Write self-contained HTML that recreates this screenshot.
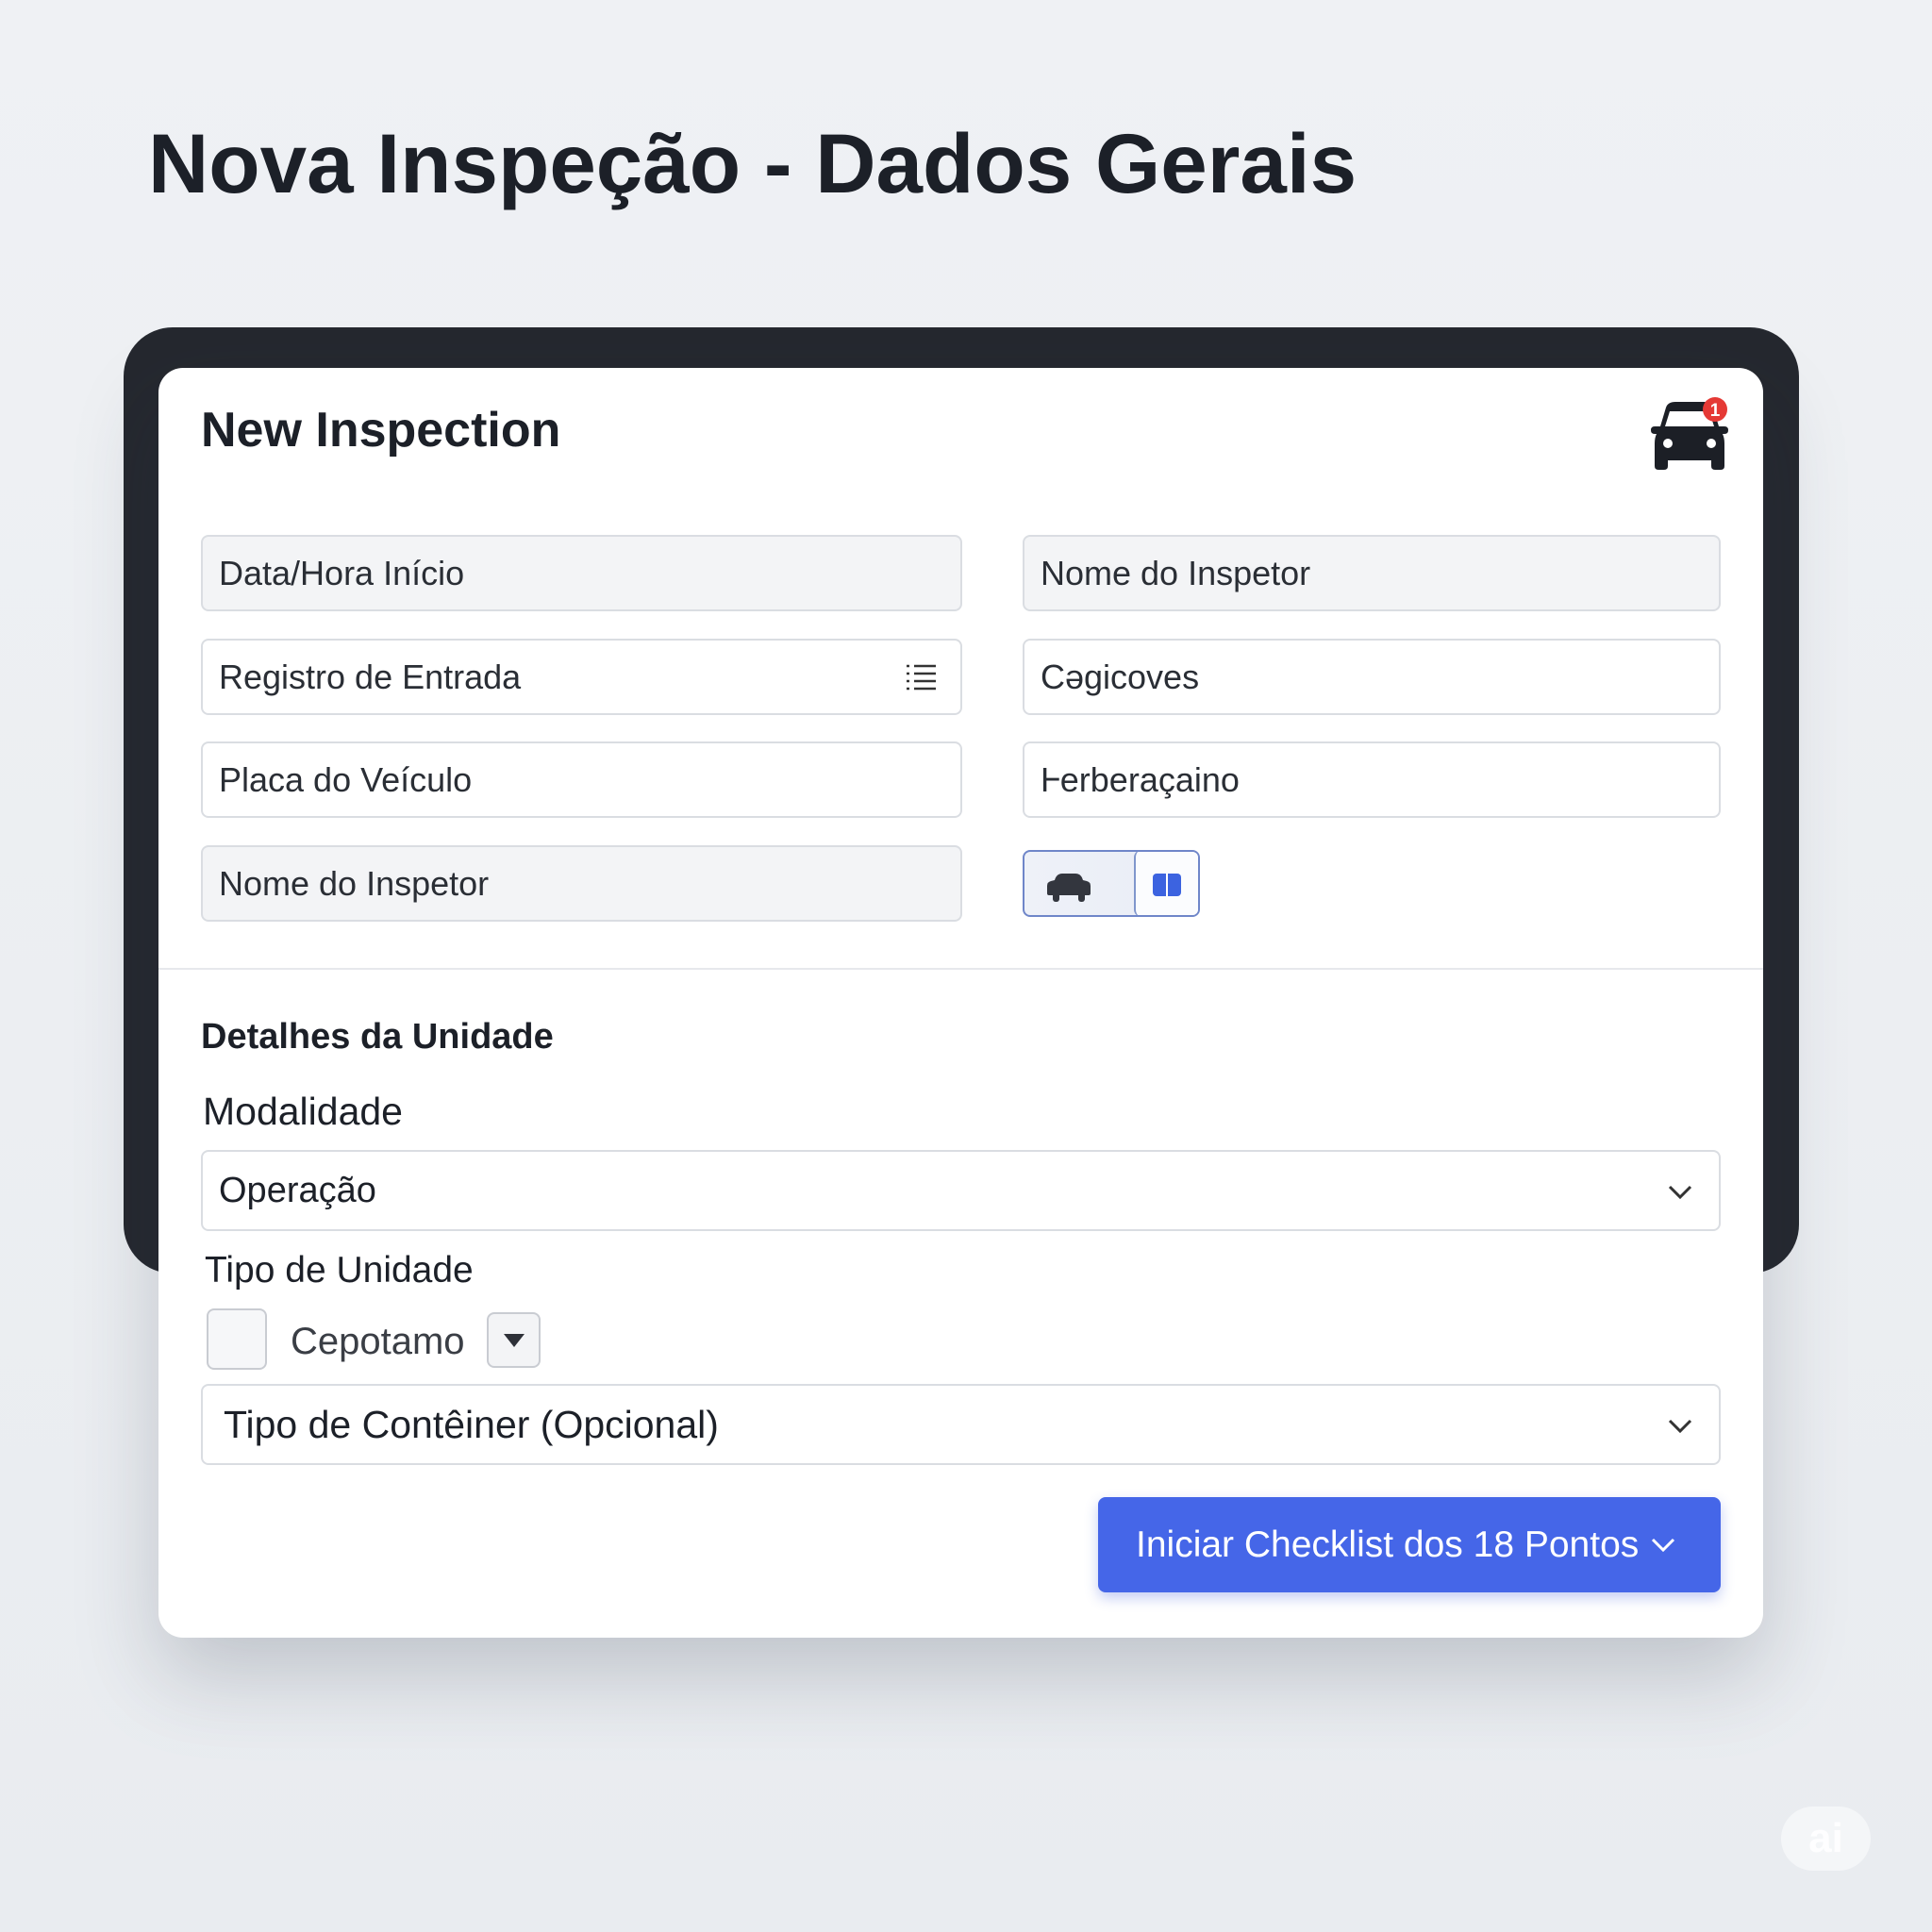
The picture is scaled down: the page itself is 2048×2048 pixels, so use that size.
<!DOCTYPE html>
<html><head><meta charset="utf-8"><style>
*{box-sizing:border-box;margin:0;padding:0}
body{width:2048px;height:2048px;background:linear-gradient(180deg,#eff1f4,#e9ecf0);font-family:"Liberation Sans",sans-serif;position:relative;overflow:hidden;color:#1f2329}
.a{position:absolute}
h1{position:absolute;left:157px;top:122px;font-size:89px;font-weight:bold;color:#1c2028;white-space:nowrap}
.frame{left:131px;top:347px;width:1776px;height:1003px;background:#25282f;border-radius:52px}
.card{left:168px;top:390px;width:1701px;height:1346px;background:#fff;border-radius:26px;box-shadow:0 40px 90px rgba(40,50,70,.22)}
.in{position:absolute;height:81px;border:2px solid #dadde2;border-radius:8px;background:#fff;font-size:36px;color:#2a2e35;padding-left:17px;line-height:77px;white-space:nowrap}
.g{background:#f3f4f6}
.L{left:213px;width:807px}.R{left:1084px;width:740px}
.sel{position:absolute;left:213px;width:1611px;height:86px;border:2px solid #dadde2;border-radius:8px;background:#fff;color:#1c2028;padding-left:17px;line-height:82px;white-space:nowrap}
.chev{position:absolute;right:26px;top:28px}
</style></head><body>
<h1>Nova Inspeção - Dados Gerais</h1>
<div class="a frame"></div>
<div class="a card"></div>
<div class="a" style="left:213px;top:426px;font-size:52px;font-weight:bold;color:#1c2028">New Inspection</div>
<svg class="a" style="left:1748px;top:418px" width="90" height="85" viewBox="0 0 90 85">
<path d="M18 14 Q20 8 28 8 H58 Q66 8 68 14 L74 34 H80 Q84 34 84 38 Q84 42 80 42 H78 Q80 46 80 52 V76 Q80 80 76 80 H70 Q66 80 66 76 V70 H20 V76 Q20 80 16 80 H10 Q6 80 6 76 V52 Q6 46 8 42 H6 Q2 42 2 38 Q2 34 6 34 H12 Z M22 18 L17 34 H69 L64 18 Z" fill="#1c1f26" fill-rule="evenodd"/>
<circle cx="20" cy="52" r="5" fill="#fff"/><circle cx="66" cy="52" r="5" fill="#fff"/>
<circle cx="70" cy="16" r="13" fill="#e53935"/>
<text x="70" y="23" font-size="19" font-weight="bold" fill="#fff" text-anchor="middle" font-family="Liberation Sans">1</text>
</svg>
<div class="in g L" style="top:567px">Data/Hora Início</div>
<div class="in g R" style="top:567px">Nome do Inspetor</div>
<div class="in L" style="top:677px">Registro de Entrada
<svg class="a" style="right:24px;top:22px" width="36" height="36" viewBox="0 0 36 36" stroke="#333" stroke-width="2.5"><path d="M3 5h3M3 13h3M3 21h3M3 29h3M11 5h23M11 13h23M11 21h23M11 29h23"/></svg></div>
<div class="in R" style="top:677px">Cəgicoves</div>
<div class="in L" style="top:786px">Placa do Veículo</div>
<div class="in R" style="top:786px">Ⱶerberaçaino</div>
<div class="in g L" style="top:896px">Nome do Inspetor</div>
<div class="a" style="left:1084px;top:901px;width:188px;height:71px;border:2px solid #6f86c9;border-radius:8px;background:linear-gradient(90deg,#eef1f8,#e9edf6);overflow:hidden">
<div class="a" style="left:116px;top:-2px;width:72px;height:71px;border-left:2px solid #8096cc;border-radius:8px;background:#fbfcfe"></div>
<svg class="a" style="left:22px;top:20px" width="50" height="34" viewBox="0 0 50 34"><path d="M10 10 Q12 3 18 3 H32 Q38 3 40 10 L44 11 Q48 12 48 16 V24 Q48 26 46 26 H4 Q2 26 2 24 V16 Q2 12 6 11 Z" fill="#33363e"/><rect x="8" y="22" width="7" height="11" rx="3" fill="#33363e"/><rect x="35" y="22" width="7" height="11" rx="3" fill="#33363e"/></svg>
<div class="a" style="left:136px;top:23px;width:30px;height:24px;background:#3c63e0;border-radius:4px"></div>
<div class="a" style="left:150px;top:23px;width:2px;height:24px;background:#fff"></div>
</div>
<div class="a" style="left:168px;top:1026px;width:1701px;height:2px;background:#e6e8ec"></div>
<div class="a" style="left:213px;top:1078px;font-size:38px;font-weight:bold;color:#1c2028">Detalhes da Unidade</div>
<div class="a" style="left:215px;top:1155px;font-size:41px;color:#1c2028">Modalidade</div>
<div class="sel" style="top:1219px;font-size:38px">Operação
<svg class="chev" width="30" height="30" viewBox="0 0 30 30"><path d="M4 9l11 11 11-11" fill="none" stroke="#333" stroke-width="3"/></svg></div>
<div class="a" style="left:217px;top:1325px;font-size:39px;color:#1c2028">Tipo de Unidade</div>
<div class="a" style="left:219px;top:1387px;width:64px;height:65px;border:2px solid #c9ccd2;border-radius:8px;background:#f6f7f9"></div>
<div class="a" style="left:308px;top:1400px;font-size:40px;color:#3a3e45">Cepotamo</div>
<div class="a" style="left:516px;top:1391px;width:57px;height:59px;border:2px solid #c9ccd2;border-radius:8px;background:#f3f4f6"></div>
<svg class="a" style="left:532px;top:1412px" width="26" height="18" viewBox="0 0 26 18"><path d="M2 2h22L13 16z" fill="#2e3138"/></svg>
<div class="sel" style="top:1467px;font-size:41px;padding-left:22px">Tipo de Contêiner (Opcional)
<svg class="chev" width="30" height="30" viewBox="0 0 30 30"><path d="M4 9l11 11 11-11" fill="none" stroke="#333" stroke-width="3"/></svg></div>
<div class="a" style="left:1164px;top:1587px;width:660px;height:101px;background:#4566e8;border-radius:8px;box-shadow:0 6px 14px rgba(60,90,220,.3);color:#fff;font-size:39px;line-height:101px;padding-left:40px;white-space:nowrap">Iniciar Checklist dos 18 Pontos
<svg class="a" style="right:46px;top:36px" width="30" height="30" viewBox="0 0 30 30"><path d="M4 9l11 11 11-11" fill="none" stroke="#fff" stroke-width="3"/></svg></div>
<div class="a" style="left:1888px;top:1915px;width:95px;height:68px;border-radius:34px;background:rgba(255,255,255,.5);color:rgba(255,255,255,.9);font-size:44px;font-weight:bold;text-align:center;line-height:68px">ai</div>
</body></html>
